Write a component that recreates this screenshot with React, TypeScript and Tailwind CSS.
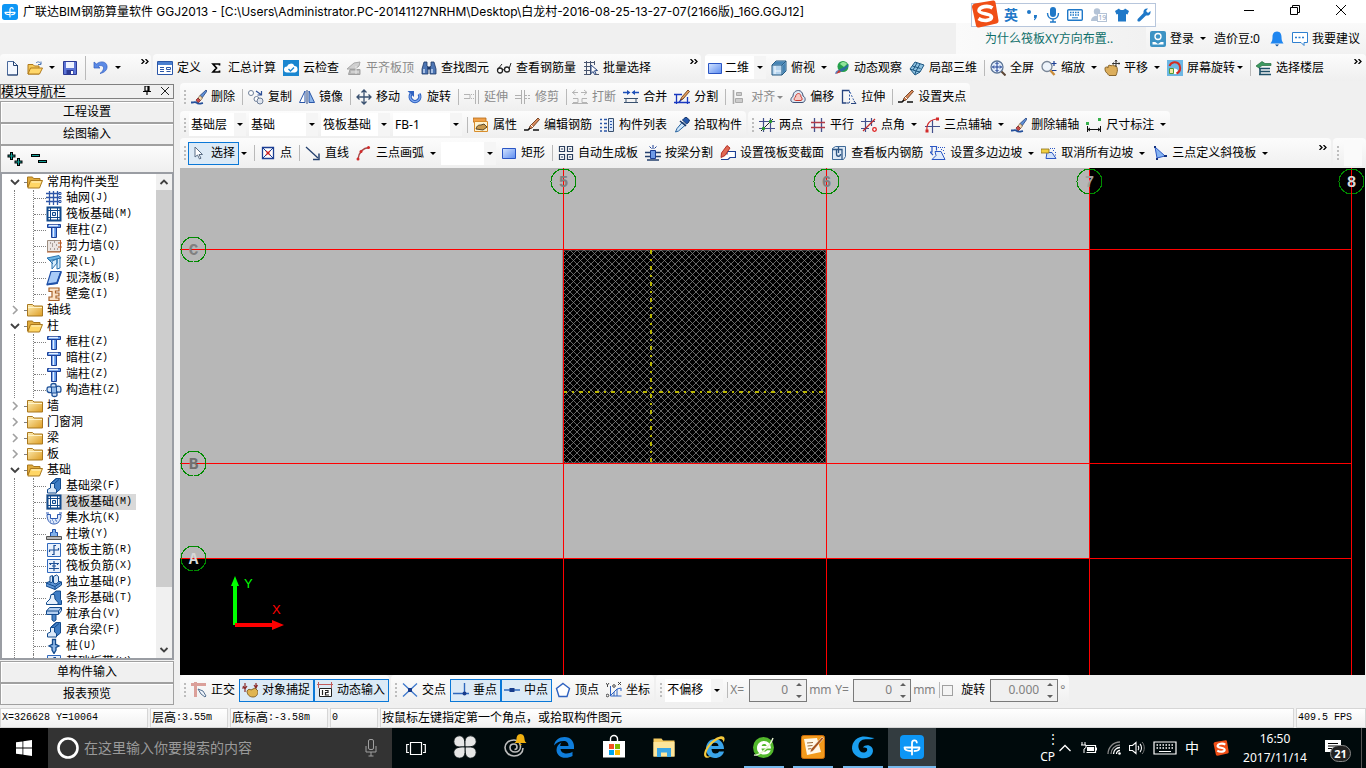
import type { ReactNode } from "react";

const CJK = "font-['Noto_Sans','Noto_Sans_CJK_SC',sans-serif]";

/* ---------- 16x16 icon drawings ---------- */

const column = (
  <>
    <path d="M1.5 2.5h13v3h-13z" fill="#5f97ea" stroke="#1c3f94" />
    <path d="M5.5 5.5h5v10h-5z" fill="#5f97ea" stroke="#1c3f94" />
    <path d="M7.5 6v9M3 3.5h9" stroke="#e4efff" strokeWidth="1.4" />
  </>
);
const raft = (
  <>
    <path d="M1.5 1.5h13v13h-13z" fill="#fff" stroke="#124a8c" strokeWidth="2" />
    <path d="M4.5 1v14M11.5 1v14M1 4.5h14M1 11.5h14" stroke="#124a8c" />
    <path d="M6.5 6.5h3v3h-3z" fill="#cfe2f7" stroke="#124a8c" />
  </>
);
const beam3d = (
  <>
    <path d="M5 5l5-4.500h4.500V11l-5 4z" fill="#3d7cc4" stroke="#124a8c" />
    <path d="M1.500 15v-3.500l3-1.500V5.500h4V10l2 1.500V15z" fill="#dbe9f9" stroke="#124a8c" />
    <path d="M5 5l5-4M8.500 5.500L13 1.500" stroke="#124a8c" />
  </>
);
const eraser = (
  <>
    <path d="M15 1L9 6.5l2 2.5L16 2z" fill="#5d8fd6" stroke="#27447f" strokeWidth=".8" />
    <path d="M9 6.5L7 9l2.5 2.5L11.5 9z" fill="#f0d9b4" stroke="#7b5a32" strokeWidth=".7" />
    <path d="M7 9l-2 2 2 3 2.5-2.5z" fill="#c94a4a" stroke="#6e2020" strokeWidth=".7" />
    <path d="M0 13.5c3 0 5-1 6 .5s4 .5 6 0" stroke="#24509c" fill="none" strokeWidth="1.8" />
  </>
);
const pencil = (
  <>
    <path d="M14 1l1.5 1.500L8 11l-3 1 1-3z" fill="#d98b5c" stroke="#6b3a1c" strokeWidth=".9" />
    <path d="M7 8l2 2" stroke="#fff" />
    <path d="M0 13h4l2-2M9 13h6" stroke="#111" strokeWidth="1.5" fill="none" />
  </>
);
const rectIcon = (
  <>
    <defs>
      <linearGradient id="rectFill" x1="0" y1="0" x2="1" y2="1">
        <stop offset="0" stopColor="#d5e5ff" />
        <stop offset="1" stopColor="#5c8cf0" />
      </linearGradient>
    </defs>
    <path d="M1.5 3.5h13v10h-13z" fill="url(#rectFill)" stroke="#2a55c4" />
  </>
);

const ICONS: Record<string, ReactNode> = {
  newFile: (
    <>
      <path d="M3.5 1.5h6l4 4v9.5h-10z" fill="#f4f8ff" stroke="#4a6a9c" />
      <path d="M9.5 1.5v4h4M13.5 5v10h-10" fill="none" stroke="#24406e" />
    </>
  ),
  open: (
    <>
      <path d="M1 4.5h5l1.5 1.5H12v8H1z" fill="#f4c95a" stroke="#b07a1c" />
      <path d="M3.5 8h12L12.5 14H1z" fill="#ffd76a" stroke="#b07a1c" />
      <path d="M9 3c2-2 4-1 5 1M14 1.5V4.5h-3" stroke="#4e79b8" fill="none" />
    </>
  ),
  save: (
    <>
      <path d="M1.5 1.5h13v13h-13z" fill="#5b74d6" stroke="#2c3a94" />
      <path d="M4 2h8v6H4z" fill="#eef2ff" />
      <path d="M4.5 10h7v4.5h-7z" fill="#2c3a94" />
      <path d="M9 11h2v3H9z" fill="#fff" />
    </>
  ),
  undo: <path d="M1 2v6h6L5 6.500c3-2 6-.5 5.500 2-.3 2-1.500 3.500-3.500 5 5-1 7.500-4 7-7.500C13.500 1.500 7.500.5 3.500 4z" fill="#5b8ae6" stroke="#2f5cc0" strokeWidth=".7" />,
  define: (
    <>
      <path d="M.5 1.5h15v13H.5z" fill="#fff" stroke="#2b57a8" />
      <path d="M1 2h14v3H1z" fill="#4a7fd0" />
      <path d="M3 7.5h4M3 9.5h4M3 11.5h4M9.5 7.5h4v2h-4zM9.5 11.5h4" stroke="#2b57a8" fill="none" />
    </>
  ),
  sigma: <path d="M11.500 5.500V4H5l3.500 4L5 12h6.500v-1.500" stroke="#000" strokeWidth="1.700" fill="none" />,
  cloudCheck: (
    <>
      <path d="M0 0h16v16H0z" fill="#1a86d0" />
      <path d="M4 12.5a3 3 0 010-6 4 4 0 017.5-.5 3.300 3.300 0 01.5 6.500z" fill="#fff" />
      <path d="M5.5 9l2 2L11 7.5" stroke="#1a86d0" strokeWidth="1.400" fill="none" />
    </>
  ),
  flush: (
    <>
      <path d="M1 9l7-6 6-1-1 4-4 3z" fill="#d0d0d0" stroke="#a8a8a8" />
      <path d="M4 9.5h10v5H2.5z" fill="#b8b8b8" stroke="#a0a0a0" />
      <path d="M5 12h8M10 6v8" stroke="#e8e8e8" />
    </>
  ),
  binoculars: (
    <>
      <path d="M3 2h3v4l1 1v7H1V9zM10 2h3l2 7v5H9V7l1-1z" fill="#4d75b3" stroke="#1d3766" strokeWidth=".8" />
      <path d="M6.5 6.5h3v3h-3z" fill="#1d3766" />
      <path d="M3 9v4M11 9v4" stroke="#cfe0fa" strokeWidth="1.400" />
    </>
  ),
  glasses: (
    <>
      <circle cx="4" cy="10.500" r="2.500" fill="#fff" stroke="#222" strokeWidth="1.300" />
      <circle cx="11" cy="9.500" r="2.500" fill="#fff" stroke="#222" strokeWidth="1.300" />
      <path d="M6.500 10l2-.5M2 9l4-5M13 9l2-6" stroke="#222" fill="none" />
    </>
  ),
  batch: (
    <>
      <path d="M1 2.5h11M1 6.5h8M1 10.5h6M1 14.5h6M3.5 1v14M7.5 1v14M11.5 1v4" stroke="#49556e" />
      <path d="M8 5l6.500 5.500-3 .3 1.500 3-1.500.7-1.300-3L8 13.500z" fill="#fff" stroke="#27447f" />
      <path d="M12 14.500h4" stroke="#49556e" />
    </>
  ),
  rect: rectIcon,
  cube: (
    <>
      <path d="M1 5l4-4h10v10l-4 4H1z" fill="#b5d4ee" stroke="#23577e" />
      <path d="M1 5h10v10M11 5l4-4" fill="none" stroke="#23577e" />
      <path d="M1.500 4.800L5 1.500h9L10.800 4.800zM11.500 5.500L14.500 2v9l-3 3z" fill="#4684b4" />
      <path d="M4 6v8M4 11h6" stroke="#f5faff" />
    </>
  ),
  orbit: (
    <>
      <circle cx="9" cy="6.500" r="5.500" fill="#25a04a" />
      <path d="M6 4c2-3 6-2 7 0l-3 3z" fill="#8fe39a" />
      <path d="M1 14C2 9 5 11 15 4c-1 6-8 8-14 10z" fill="#2d62b5" opacity=".8" />
      <path d="M2 14l3-4 2 2z" fill="#d23a2a" />
    </>
  ),
  local3d: (
    <>
      <path d="M1 9l5-7 9 3-4 7-5 3z" fill="#8ec1e0" stroke="#1d5680" />
      <path d="M1 9l6 2 4 1M7 11l4-7M6 14l1-3M3.500 6l8 2.500M4 10l4-7" stroke="#1d5680" fill="none" />
    </>
  ),
  fullscreen: (
    <>
      <circle cx="7" cy="7" r="6" fill="#e4eefb" stroke="#5c7597" strokeWidth="1.300" />
      <path d="M11.500 11.500l4 4" stroke="#5b4636" strokeWidth="2" />
      <path d="M7 2.500v9M2.500 7h9M5.500 4L7 2.500 8.500 4M5.500 10L7 11.500 8.500 10M4 5.500L2.500 7 4 8.500M10 5.500L11.500 7 10 8.500" stroke="#1c3f94" fill="none" />
    </>
  ),
  zoom: (
    <>
      <circle cx="6" cy="6.500" r="5" fill="#eef4fb" stroke="#7a8798" strokeWidth="1.300" />
      <path d="M9.500 10.500l4 4.500" stroke="#c98c3a" strokeWidth="2.400" />
      <path d="M13 1v5M10.500 3.500h5M11 10.500h4.500" stroke="#1c3f94" strokeWidth="1.200" />
    </>
  ),
  pan: (
    <>
      <path d="M1 9c0-3 2-2 3-1V6l2-1 1 1 1.500-1 1.500 1 1.500-.5 1.500 2c1 3 0 5-1 8H5c-1-2-4-3-4-6z" fill="#dcae5c" stroke="#7d5a20" strokeWidth=".9" />
      <path d="M12 0v7M8.500 3.500H16M11 1.500L12 0l1 1.500M9.500 2.500l-1 1 1 1M15 2.500l1 1-1 1" stroke="#333" fill="none" />
    </>
  ),
  rotateScreen: (
    <>
      <path d="M0 0h16v16H0z" fill="#6db7e4" />
      <path d="M5 9a4 3 0 016 2l-1 3H4z" fill="#fff" />
      <path d="M2.500 6a5.500 5.500 0 0110-1c1.500 4 0 7-3 8.500" stroke="#d42b20" strokeWidth="2" fill="none" />
      <path d="M2.500 8.500h4v5h-4z" fill="#f4e6a0" stroke="#4f9c3d" />
    </>
  ),
  floors: (
    <>
      <path d="M0 6l6-4.500 3 2H15v2H6L3 8z" fill="#3c9a60" stroke="#226b3d" strokeWidth=".7" />
      <path d="M3 8.500h11M4 11.500h10M3 14.500h12M4 8v7" stroke="#1f5068" strokeWidth="1.600" fill="none" />
    </>
  ),
  eraser,
  copy: (
    <>
      <circle cx="3" cy="4" r="2.500" fill="#fff" stroke="#6f7f98" />
      <circle cx="8.500" cy="10" r="2.500" fill="#fff" stroke="#6f7f98" />
      <circle cx="12" cy="12" r="3" fill="#dfe5ee" stroke="#6f7f98" />
      <path d="M8 2l5 3.500M13.500 2v4h-4" stroke="#2d4f96" strokeWidth="1.200" fill="none" />
    </>
  ),
  mirror: (
    <>
      <path d="M.5 13.500L6 2v11.500z" fill="#fff" stroke="#2b57a8" />
      <path d="M10 13.500V2l5.500 11.500z" fill="#8db6ea" stroke="#2b57a8" />
      <path d="M8 1v14" stroke="#27447f" />
    </>
  ),
  move: (
    <path d="M8 1v14M1 8h14M5.500 3.500L8 1l2.500 2.500M5.500 12.500L8 15l2.500-2.500M3.500 5.500L1 8l2.500 2.500M12.500 5.500L15 8l-2.500 2.500" stroke="#3a5170" strokeWidth="1.300" fill="none" />
  ),
  rotate: (
    <>
      <path d="M4 5a4.800 4.800 0 108 0" stroke="#2f62c0" strokeWidth="3.400" fill="none" />
      <path d="M4 5a4.800 4.800 0 108 0" stroke="#7fa8f0" strokeWidth="1.200" fill="none" />
      <path d="M.5 2h6.500v6z" fill="#2f62c0" />
    </>
  ),
  extend: (
    <>
      <path d="M0 5.500h6v4H0M7 5.500h1M9 5.500h1M7 9.500h1M9 9.500h1" stroke="#b4b4b4" fill="none" />
      <path d="M11.500 1v14M14.500 1v14" stroke="#b4b4b4" />
    </>
  ),
  trim: (
    <path d="M0 6.500h6M0 9.500h6M6.500 1v14M9.500 1v14M10 6.500h2M13 6.500h2M10 9.500h2M13 9.500h2" stroke="#b0b0b0" />
  ),
  breakIt: (
    <path d="M0 3.500h6M3.500 1l-3 2.500 3 2.500M9 3.500h6M12 1l3 2.500-3 2.500M1 9.500h5v4H1M15 9.500h-5v4h5M0 14.500h16" stroke="#b4b4b4" fill="none" />
  ),
  merge: (
    <>
      <path d="M0 3.500h5M10 3.500h6" stroke="#1e50b8" strokeWidth="1.400" />
      <path d="M4 1l3.500 2.500L4 6zM12 1L8.500 3.500 12 6z" fill="#1e50b8" />
      <path d="M1 9.500h14M1 13.500h14M3 9v5M13 9v5" stroke="#38506e" />
    </>
  ),
  split: (
    <>
      <path d="M0 5.500h8M0 13.500h16M2.500 5v10M13.500 8v7M5 13l5-5" stroke="#1838c0" strokeWidth="1.300" fill="none" />
      <path d="M14 1l1.500 1.500L9 10l-2.500 1L7.500 8.500z" fill="#e6a25c" stroke="#6b3a1c" strokeWidth=".9" />
    </>
  ),
  align: (
    <>
      <path d="M2.500 1v14" stroke="#aaa" strokeWidth="1.600" />
      <path d="M5.500 3.500h5v3h-5zM4.500 9.500h7v4h-7z" fill="#ccc" stroke="#aaa" />
    </>
  ),
  offset: (
    <>
      <path d="M4 13.500C-1 13.500 1 8 3 7.500 3 3 6 1.500 8.500 1.500S13 4 13 7c3 1 3 6.500-1 6.500z" fill="#e0e8f2" stroke="#3c4f74" />
      <path d="M5.500 11.500c-2 0-1.500-3 0-3.500 0-2 1.500-3.500 3-3.500s2.500 1.500 2.500 3.500c1.500.5 1.500 3.500 0 3.500z" fill="#f7c9c4" stroke="#cc3a30" />
    </>
  ),
  stretch: (
    <>
      <path d="M8.500 1.500h-7v12.500h4" stroke="#27447f" fill="none" strokeWidth="1.300" />
      <path d="M8.500 2v12M9 3l4.500 10" fill="none" stroke="#3d63a8" strokeDasharray="2 1.500" />
      <path d="M6 14h2M10 14.500h5M13 12l2 2.500" stroke="#27447f" fill="none" />
    </>
  ),
  pencil,
  property: (
    <>
      <path d="M0 1h13v4H0z" fill="#f0a048" stroke="#b56a18" strokeWidth=".8" />
      <path d="M1.500 4.500h13v10h-13z" fill="#fff3cf" stroke="#d88d2c" />
      <path d="M3 12c1-4 3-4 5-4l3-1 3 3-4 3z" fill="#c9994c" stroke="#4a3a1e" strokeWidth=".9" />
    </>
  ),
  list: (
    <>
      <path d="M1 2.500h2M5 2.500h3M1 6.500h2M5 6.500h3M1 10.500h2M5 10.500h3M1 14h2M5 14h3" stroke="#2b57a8" strokeWidth="1.300" />
      <path d="M9.500 1.500h5v13h-5z" fill="#d8e6fa" stroke="#38506e" />
      <path d="M11 4.500h2M11 7.500h2M11 10.500h2" stroke="#2b57a8" />
    </>
  ),
  picker: (
    <>
      <path d="M10 1.500L12 0l3.500 3-1 2.500-2 1.500-4-4z" fill="#2458ad" stroke="#143468" />
      <path d="M8.500 5l3 3-7 6L1.500 15 3 11.500z" fill="#cfe6fb" stroke="#27629e" />
      <path d="M6 4l6 5" stroke="#143468" strokeWidth="1.500" />
    </>
  ),
  axisTwo: (
    <>
      <path d="M0 4.500h16M0 11.500h16M4.500 1v14M11.500 1v14" stroke="#43508c" strokeWidth="1.200" />
      <path d="M2 14L14 2" stroke="#222" />
      <circle cx="11.500" cy="4.500" r="1.700" fill="#2a9a30" />
      <circle cx="4.500" cy="11.500" r="1.700" fill="#2a9a30" />
    </>
  ),
  axisParallel: (
    <>
      <path d="M4.500 1v14M11.500 1v14" stroke="#43508c" strokeWidth="1.300" />
      <path d="M1 5.500h14M1 10.500h14" stroke="#b23a48" strokeWidth="1.300" />
    </>
  ),
  axisAngle: (
    <>
      <path d="M0 4.500h14M0 11.500h8M4.500 1v14M10.500 1v8" stroke="#43508c" strokeWidth="1.200" />
      <path d="M2 14L14 2" stroke="#c22a2a" strokeWidth="1.200" />
      <circle cx="13.500" cy="12.500" r="1.800" fill="#fff" stroke="#d22" strokeWidth="1.300" />
    </>
  ),
  axisThree: (
    <>
      <path d="M1 9.500h15M8.500 3v13" stroke="#43508c" strokeWidth="1.200" />
      <path d="M3 14C2 7 6 2 14 2" stroke="#d22a2a" strokeWidth="1.200" fill="none" />
      <path d="M12 .5h3v3h-3zM1.500 12.500h3v3h-3z" fill="#d22a2a" />
    </>
  ),
  dimension: (
    <>
      <path d="M1.500 9v6M14.500 9v6M2 12.500h12M4 11l-2 1.500L4 14M12 11l2 1.500L12 14" stroke="#111" fill="none" />
      <path d="M0 5h3v3H0zM12 1h3v3h-3z" fill="#36b04a" />
    </>
  ),
  cursor: <path d="M4 2v10l2.500-2 2 4 1.500-.8-2-3.700h3.500z" fill="#fff" stroke="#5b6f86" />,
  point: (
    <>
      <path d="M2.500 2.500h11v11h-11z" fill="#fff" stroke="#1c3f94" strokeWidth="1.300" />
      <path d="M3 3l10 10M13 3L3 13" stroke="#1c3f94" />
      <path d="M6 6l4 4M10 6l-4 4" stroke="#c22" strokeWidth="1.400" />
    </>
  ),
  line: (
    <>
      <path d="M1 2l12 11" stroke="#24406e" strokeWidth="1.300" />
      <path d="M14 8.500v6H8" stroke="#24406e" strokeWidth="1.500" fill="none" />
    </>
  ),
  arc: (
    <>
      <path d="M2 14C3 8 6 3 13 2.500" stroke="#a84848" strokeWidth="1.500" fill="none" />
      <circle cx="12.500" cy="2.500" r="1.500" fill="#d22a2a" />
      <circle cx="5" cy="6.500" r="1.500" fill="#d22a2a" />
      <circle cx="2" cy="14" r="1.500" fill="#d22a2a" />
    </>
  ),
  autoSlab: (
    <path d="M1.500 1.500h5v5h-5zM9.500 1.500h5v5h-5zM1.500 9.500h5v5h-5zM9.500 9.500h5v5h-5zM3 4h2M11 4h2M3 12h2M11 12h2" fill="#fff" stroke="#2b3f5e" strokeWidth="1.200" />
  ),
  beamSplit: (
    <>
      <path d="M0 7.500h16M0 11.500h16M2 15h12" stroke="#24406e" strokeWidth="1.300" />
      <path d="M5.500 5.500h5v8h-5z" fill="#6f9be6" stroke="#1c3f94" />
      <path d="M8 0v4M4.500 1.500l2 2M11.500 1.500l-2 2" stroke="#1c3f94" />
    </>
  ),
  raftSection: (
    <>
      <path d="M7 9.500V6.500h8.500v6H10l-2 2H1" stroke="#1c3f94" strokeWidth="1.200" fill="#fff" />
      <path d="M7 .5l3 2.500L5 10.500l-4 2 .5-4.500z" fill="#e06a54" stroke="#b02418" strokeWidth=".9" />
    </>
  ),
  rebarView: (
    <>
      <path d="M1.500 3.500l3-2h10v10l-2 3h-11z" fill="#dfeaf6" stroke="#3f6a98" />
      <path d="M1 4.500h10v10M5.500 4v5c0 3 4 3 4 0M7.500 2v6" fill="none" stroke="#2d5684" strokeWidth="1.300" />
    </>
  ),
  slope: (
    <>
      <path d="M5 6.500h6l4 8H2l4-4z" fill="#e2ecfb" stroke="#2b57c4" />
      <path d="M0 1.500h6M6.500 1v4.500M2 2v5H0l3 3" stroke="#2b57c4" strokeWidth="1.200" fill="none" />
      <path d="M8 2.500h1M10 2.500h1M12 2.500h1M14 2.500h1M13 5.500h1M11 4.500h1M14 8.500h1" stroke="#2b57c4" />
    </>
  ),
  slopeCancel: (
    <>
      <path d="M6 7.500h5l4 6H5z" fill="#cfe0fb" stroke="#2b57c4" />
      <path d="M0 4h8v4H0z" fill="#f2d040" stroke="#8c701c" strokeWidth=".8" />
      <path d="M9 3.500h1M11 3.500h1M13 3.500h1M12 5.500h1M14 7.500h1M14 10h1" stroke="#2b57c4" />
    </>
  ),
  raftSlope: (
    <>
      <path d="M3 2l10 9-8 2z" fill="#86b4f2" stroke="#2b57c4" />
      <path d="M2 1h2v2H2zM12 10h3v2h-3zM4 13h2v2H4z" fill="#12307c" />
    </>
  ),
  ortho: (
    <>
      <path d="M0 2.500h15M4.500 0v15" stroke="#dba09a" strokeWidth="3" />
      <path d="M7 7l5 2 3 5-1 1-4-3z" fill="#eef3fa" stroke="#56708f" />
    </>
  ),
  snap: (
    <>
      <path d="M3 1v9M1 4l2 3 2-3M14 1v5M12 3l2 3 1.500-3M0 6h3" stroke="#8a2a2a" strokeWidth="1.200" fill="none" />
      <path d="M5 9c1-2 3-2 4-1l4-2 3 3c0 4-2 6-5 6-4 0-6-3-6-6z" fill="#e0b450" stroke="#7d5a20" strokeWidth=".9" />
    </>
  ),
  dynInput: (
    <>
      <path d="M0 2.500h16M1.500 0v6M14.500 0v6" stroke="#c25b5b" />
      <path d="M2.500 6.500h12v8h-12z" fill="#fff" stroke="#222" />
      <path d="M5.500 8v5M8 8.500h3v2H8.500V13H12" stroke="#222" strokeWidth="1.200" fill="none" />
    </>
  ),
  cross: (
    <>
      <path d="M1 1.500l14 13M15 1.500l-14 13" stroke="#3d78cc" strokeWidth="1.300" />
      <path d="M6 6h4v4H6z" fill="#173c8c" />
    </>
  ),
  perp: (
    <>
      <path d="M0 11.500h16M11.500 1v12" stroke="#2f68bd" strokeWidth="1.400" />
      <circle cx="11.500" cy="11.500" r="2" fill="#173c8c" />
    </>
  ),
  mid: (
    <>
      <path d="M0 8h16" stroke="#2f68bd" strokeWidth="1.300" />
      <path d="M5.500 6h5v4h-5z" fill="#173c8c" />
    </>
  ),
  pentagon: <path d="M8 1.500l6.500 5-2.500 8H4l-2.500-8z" fill="#fff" stroke="#2f62c0" strokeWidth="1.400" />,
  coord: (
    <>
      <path d="M4.500 4v10h11M5 13l6-6v7M8 10v4M11 7l4-1v3" stroke="#2f62c0" fill="none" />
      <path d="M0 1l1.500 2L3 1M1.500 3v2M12 0l3 3M15 0l-3 3" stroke="#333" fill="none" strokeWidth=".9" />
      <circle cx="1.500" cy="13.500" r="1.300" fill="none" stroke="#333" strokeWidth=".9" />
      <circle cx="8" cy="4" r="1.300" fill="none" stroke="#333" strokeWidth=".9" />
    </>
  ),
  folder: (
    <>
      <defs>
        <linearGradient id="folderFill" x1="0" y1="0" x2="1" y2="1">
          <stop offset="0" stopColor="#fff0b8" />
          <stop offset="1" stopColor="#dd9c22" />
        </linearGradient>
      </defs>
      <path d="M.5 2.500h5l1.500 1.500h8.500v10H.5z" fill="url(#folderFill)" stroke="#a9781f" />
      <path d="M1 5.500h14" stroke="#fff3c8" />
    </>
  ),
  folderOpen: (
    <>
      <path d="M.5 3h5l1 1.500h6.500V7H4L.5 13z" fill="#e0ab3c" stroke="#a9781f" />
      <path d="M3.500 6.500h12L12.500 14H.8z" fill="#ffd666" stroke="#a9781f" />
      <path d="M4.500 8h9.500" stroke="#fff3c8" />
    </>
  ),
  grid: (
    <>
      <path d="M3.500 1v14M7.500 1v14M11.500 1v14M0 3.500h13M0 7.500h13M0 11.500h13" stroke="#2f57a8" strokeWidth="1.300" />
      <path d="M13 2.500h2v2h-2zM13 6.500h2v2h-2zM13 10.500h2v2h-2z" fill="#fff" stroke="#2f57a8" />
    </>
  ),
  raft,
  column,
  wall: (
    <>
      <path d="M1.500 2.500h13v11h-13z" fill="#ece6e2" stroke="#9c8d80" />
      <path d="M4 5h1M8 4h1M6 8h1M10 7h1M4 11h1M8 11h1M11 11h1M6 6h1" stroke="#6b5a50" />
      <path d="M1 14h13M14.500 2v12M12 5h4M12 9h4" stroke="#b85a24" fill="none" />
    </>
  ),
  beam: (
    <>
      <path d="M1 4l12-2.500L15 4 4 6.500z" fill="#6fb6e6" stroke="#2b74b0" />
      <path d="M6 7l5-2v4L6 15zM11 5l3-1v10l-3 1z" fill="#d9eefb" stroke="#2b74b0" />
      <path d="M2 5l5 5" stroke="#2b74b0" />
    </>
  ),
  slab: (
    <>
      <path d="M5 1.500h10L11 13.500l-10 1z" fill="#a9cbf7" stroke="#1f50a8" strokeWidth="1.200" />
      <path d="M1 14.500L11 13l4-11" fill="none" stroke="#1f50a8" strokeWidth="1.800" />
    </>
  ),
  niche: <path d="M3 2h10v3H9.500v2H13v3h-3v2h3v2.500H3V11h3V5.500H3z" fill="#fbe3c8" stroke="#a8622a" strokeWidth="1.200" />,
  structCol: (
    <>
      <path d="M5 3c0-2 5-2 5 0v1.500c4-1 5 0 5 3s-1 3-4 2.500V13c0 2-5 2-5 0v-2.500c-4 .5-5-.5-5-3s1-3 4-2.500z" fill="#d4e5f8" stroke="#1c4f96" strokeWidth="1.300" />
      <path d="M5.500 5h5v6h-5z" fill="#8fb8e8" stroke="#1c4f96" />
    </>
  ),
  beam3d,
  pit: (
    <>
      <path d="M1 4.500h3.500v4h7v-4H15C15 11 12 14 8 14S1 11 1 4.500z" fill="#dbe8fb" stroke="#2b57b0" />
      <path d="M4 11h1M7 12h1M10 11h1M6 10h1M9 10h1M0 3h3M13 3h3" stroke="#2b57b0" />
    </>
  ),
  pier: (
    <>
      <path d="M6.500 3.500h3v3h2v4h-7v-4h2z" fill="#7fb0ea" stroke="#1f50a8" />
      <path d="M.5 10.500h15v3H.5z" fill="#b8b8b8" stroke="#555" />
    </>
  ),
  mainBar: (
    <>
      <path d="M1.500 1.500h13v13h-13z" fill="#eaf2fd" stroke="#2f68bd" />
      <path d="M8 3v10M3 8h10M8 3.500h2M6 12.500h2M3.500 8v2M12.500 6v2" stroke="#1c4f96" strokeWidth="1.200" />
    </>
  ),
  negBar: (
    <>
      <path d="M1.500 1.500h13v13h-13z" fill="#eaf2fd" stroke="#2f68bd" />
      <path d="M8 3v10M3 5.500h10M3 10.500h10M4.500 5v2M11.500 5v2M6 8h4" stroke="#1c4f96" strokeWidth="1.200" />
    </>
  ),
  isoFoot: (
    <>
      <path d="M0 9l7-3 8.500 2v3l-6.500 4.500L0 12z" fill="#5f96d6" stroke="#124a8c" />
      <path d="M0 9l9 3.500L15.500 8M9 12.500v3" fill="none" stroke="#124a8c" />
      <path d="M4 2.500l2.500-1V8L4 9zM7.500 2.500l3-1.500 2 1.500V8l-2.500 2-2.500-1z" fill="#d6e6f8" stroke="#124a8c" />
    </>
  ),
  strip: (
    <>
      <path d="M6 4.500L10 1h4.500v8.500l1 1v4H9z" fill="#3d7cc4" stroke="#124a8c" />
      <path d="M.5 14.500v-2L4 9l1-4.500h3.500L9 9l3 3.500v2z" fill="#e6f0fb" stroke="#124a8c" />
    </>
  ),
  pileCap: (
    <>
      <path d="M.5 5l3-3.500h12v3l-3 4H.5z" fill="#b4cff0" stroke="#124a8c" />
      <path d="M.5 5h12l3-3.500M12.500 5v3" fill="none" stroke="#124a8c" />
      <path d="M6 8.500h4V14l-2 1.500L6 14z" fill="#4f88c9" stroke="#124a8c" />
    </>
  ),
  pile: <path d="M6.500 1.500h3v5H10l3 1.500-3 1.500V12l-2 3.500L6 12V9.500L3 8l3-1.500h.5z" fill="#8fb8e8" stroke="#124a8c" strokeWidth="1.300" />,
};

function Icon({ name }: { name: string }) {
  return (
    <svg viewBox="0 0 16 16" className="size-4 shrink-0" aria-hidden="true">
      {ICONS[name]}
    </svg>
  );
}

/* ---------- toolbar parts ---------- */

function Arrow({ dim, tight }: { dim?: boolean; tight?: boolean }) {
  return (
    <span className={"flex shrink-0 justify-end " + (tight ? "w-2" : "w-3")}>
      <svg viewBox="0 0 6 3" className={"h-[3px] w-1.5 " + (dim ? "text-[#8a8a8a]" : "text-black")}>
        <path d="M0 0h6L3 3z" fill="currentColor" />
      </svg>
    </span>
  );
}

type ToolProps = { icon: string; label?: string; dim?: boolean; menu?: boolean; tight?: boolean };

function Tool({ icon, label, dim, menu, tight }: ToolProps) {
  return (
    <button type="button" aria-label={label ?? icon} className={"flex shrink-0 items-center " + (dim ? "text-[#8a8a8a]" : "text-black")}>
      <Icon name={icon} />
      {label && <span className="ml-1">{label}</span>}
      {(menu || tight) && <Arrow dim={dim} tight={tight} />}
    </button>
  );
}

function Pressed({ icon, label }: { icon: string; label: string }) {
  return (
    <button type="button" className="flex h-[23px] shrink-0 items-center gap-1 border border-[#0a78d7] bg-[#dceaf6] pr-[3px] pl-0.5">
      <Icon name={icon} />
      <span>{label}</span>
    </button>
  );
}

const Sep = () => <span className="-mr-0.5 h-4 w-px shrink-0 bg-[#b9b9b9]" />;
const Grip = () => (
  <span className="-mr-0.5 flex shrink-0 flex-col gap-0.5">
    <i className="size-0.5 bg-[#bdbdbd]" />
    <i className="size-0.5 bg-[#bdbdbd]" />
    <i className="size-0.5 bg-[#bdbdbd]" />
    <i className="size-0.5 bg-[#bdbdbd]" />
  </span>
);

function More() {
  return (
    <button type="button" aria-label="更多" className="mb-3 shrink-0">
      <svg viewBox="0 0 8 5" className="h-[5px] w-2">
        <path d="M.5 0L3 2.500.5 5M4.500 0L7 2.500 4.500 5" fill="none" stroke="#000" strokeWidth="1.300" />
      </svg>
    </button>
  );
}

function Combo({ label, value, width }: { label: string; value: string; width: string }) {
  return (
    <span className={"flex h-[23px] shrink-0 items-center bg-white " + width}>
      <select aria-label={label} className="h-full min-w-0 flex-1 appearance-none bg-white pl-0.5 outline-none">
        <option>{value}</option>
      </select>
      <span className="flex h-full w-3 items-center justify-center bg-[#f5f5f5]">
        <svg viewBox="0 0 6 3" className="h-[3px] w-1.5">
          <path d="M0 0h6L3 3z" />
        </svg>
      </span>
    </span>
  );
}

function Bar({ children, className = "" }: { children: ReactNode; className?: string }) {
  return (
    <div className={"flex min-w-0 items-center gap-[7px] overflow-hidden rounded-sm bg-linear-to-b from-[#fcfcfc] to-[#efefef] " + className}>
      {children}
    </div>
  );
}

/* ---------- header ---------- */

function GLogo({ className }: { className: string }) {
  return (
    <svg viewBox="0 0 24 24" className={className} aria-hidden="true">
      <rect width="24" height="24" rx="4" fill="#0d96f5" />
      <path d="M12 19.500V8c0-3.500 4.500-3.500 4.800-.5M4.500 12.500H19.500M4.500 12.500c0 2.500 2.500 3.500 7 3.500M19.500 12.500c0 2.500-2 3.500-5 3.500" stroke="#fff" strokeWidth="1.800" fill="none" strokeLinecap="round" />
    </svg>
  );
}

function TitleBar() {
  return (
    <header className="flex h-[23px] shrink-0 items-center bg-white pl-0.5">
      <GLogo className="size-4 shrink-0" />
      <h1 className="ml-[5px] min-w-0 flex-1 truncate font-['Inter','Noto_Sans_CJK_SC',sans-serif] text-[12px] font-normal">
        广联达BIM钢筋算量软件 GGJ2013 - [C:\Users\Administrator.PC-20141127NRHM\Desktop\白龙村-2016-08-25-13-27-07(2166版)_16G.GGJ12]
      </h1>
      <div className="flex shrink-0 items-center gap-9 pr-5 pb-1">
        <button type="button" aria-label="最小化">
          <svg viewBox="0 0 10 10" className="size-2.5"><path d="M0 5.500h10" stroke="#000" /></svg>
        </button>
        <button type="button" aria-label="还原">
          <svg viewBox="0 0 10 10" className="size-2.5"><path d="M.5 2.500h7v7h-7zM2.500 2.500v-2h7v7h-2" fill="none" stroke="#000" /></svg>
        </button>
        <button type="button" aria-label="关闭">
          <svg viewBox="0 0 10 10" className="size-2.5"><path d="M0 0l10 10M10 0L0 10" stroke="#000" /></svg>
        </button>
      </div>
    </header>
  );
}

function SogouS({ className }: { className: string }) {
  return (
    <svg viewBox="0 0 28 28" className={className} aria-hidden="true">
      <path d="M4 3.500L22 .5c1.500 0 2 .5 2.500 2l3 18c0 2-.5 2.500-2 3L8 27.500c-2 0-2.500-.5-3-2L1 7c0-2 1-3 3-3.500z" fill="#f04e16" />
      <path d="M21.500 8C17 5 8.500 6.500 8 10.500c-.3 4 12.500 2.500 12.500 6.500 0 4-8.500 4.500-13 1.500" stroke="#fff" strokeWidth="3.600" fill="none" />
    </svg>
  );
}

function ImeBar() {
  return (
    <div className="absolute top-0 right-[210px] flex h-[27px] w-[185px] items-end">
      <div className="flex h-6 w-full items-center justify-between border border-[#b7c6dc] bg-white pr-1 pl-8 text-[#1f78c8]">
        <span className="text-[14px] font-bold">英</span>
        <svg viewBox="0 0 12 12" className="size-3 shrink-0"><circle cx="3" cy="3" r="2" fill="currentColor" /><path d="M8 6h3c0 3-1 4-3 5.500V10c1-.5 1-1 0-1z" fill="currentColor" /></svg>
        <svg viewBox="0 0 14 16" className="h-4 w-3.5 shrink-0"><rect x="4" y="0" width="6" height="10" rx="3" fill="currentColor" /><path d="M1.500 6c0 8 11 8 11 0M7 12v3M4 15h6" stroke="currentColor" strokeWidth="1.400" fill="none" /></svg>
        <svg viewBox="0 0 16 12" className="h-3 w-4 shrink-0"><rect x=".7" y=".7" width="14.600" height="10.600" rx="1" fill="none" stroke="currentColor" strokeWidth="1.400" /><path d="M3 3.500h10M3 6h10" stroke="currentColor" strokeDasharray="1.500 1" strokeWidth="1.300" /><path d="M5 8.800h6" stroke="currentColor" /></svg>
        <span className="flex shrink-0 items-end">
          <svg viewBox="0 0 12 14" className="h-3.5 w-3"><circle cx="6" cy="3.500" r="3.200" fill="#b4c3d6" /><path d="M0 13c0-7 12-7 12 0z" fill="#b4c3d6" /></svg>
          <span className="-ml-1.5 border border-[#b4c3d6] bg-white text-[7px] leading-[7px] text-[#8fa3bc]">19</span>
        </span>
        <svg viewBox="0 0 14 13" className="h-3.5 w-3.5 shrink-0"><path d="M4 0c1 2 5 2 6 0l4 2.500L12.500 6 11 5.500V13H3V5.500L1.500 6 0 2.500z" fill="currentColor" /></svg>
        <svg viewBox="0 0 14 14" className="size-3.5 shrink-0"><path d="M13.500 3l-2.500 2-2-2L11 .5C8 0 6 2 6.500 5L.7 11c-1 2 .5 3 2.300 2.200L9 7.500c3 .5 5-1.500 4.500-4.500z" fill="currentColor" /></svg>
      </div>
      <SogouS className="absolute top-0 left-0 size-7" />
    </div>
  );
}

function MenuRow() {
  return (
    <div className="flex h-[31px] shrink-0 justify-end">
      <a href="#help" className="flex w-[190px] items-center bg-linear-to-r from-[#fafafa] to-[#f1f1f1] pl-[29px] text-[#0e6f6a]">
        为什么筏板XY方向布置..
      </a>
      <div className="flex items-center bg-linear-to-b from-[#fafafa] to-[#f1f1f1] pr-1.5 pl-1">
        <button type="button" className="flex items-center">
          <svg viewBox="0 0 16 16" className="size-4"><rect width="16" height="16" rx="2" fill="#3d93c4" /><circle cx="8" cy="5.500" r="3" fill="none" stroke="#fff" strokeWidth="1.400" /><path d="M2.500 13.500V11h2.700L8 13l2.800-2h2.700v2.500z" fill="#fff" /></svg>
          <span className="ml-1">登录</span>
          <Arrow />
        </button>
        <span className="ml-2">造价豆:0</span>
        <button type="button" aria-label="通知" className="ml-2.5">
          <svg viewBox="0 0 14 16" className="h-4 w-3.5"><path d="M7 .5c3.500 0 4.500 3 4.500 5.500 0 3 .5 4.500 2 6.500H.5c1.500-2 2-3.500 2-6.500C2.500 3.500 3.500.5 7 .5z" fill="#1f86f0" /><path d="M5 13.500h4L7 15.500z" fill="#0b4f9c" /></svg>
        </button>
        <button type="button" className="ml-2 flex items-center">
          <svg viewBox="0 0 16 16" className="size-4"><path d="M.5 1.500h15v10H12v3l-3-3H.5z" fill="#fff" stroke="#2f80d0" /><path d="M3 6.500h10" stroke="#2f80d0" strokeDasharray="2 1.500" strokeWidth="1.300" /></svg>
          <span className="ml-1">我要建议</span>
        </button>
      </div>
    </div>
  );
}

function TopToolbars() {
  return (
    <div className="mb-0.5 flex h-[27px] shrink-0 gap-0.5">
      <Bar className="w-[151px] shrink-0 pr-0.5 pl-1">
        <Tool icon="newFile" />
        <Tool icon="open" menu />
        <Tool icon="save" />
        <span className="h-6 w-px shrink-0 bg-[#b9b9b9]" />
        <Tool icon="undo" menu />
        <span className="flex-1" />
        <More />
      </Bar>
      <Bar className="w-[548px] shrink-0 pr-[3px] pl-1">
        <Tool icon="define" label="定义" />
        <Tool icon="sigma" label="汇总计算" />
        <Tool icon="cloudCheck" label="云检查" />
        <Tool icon="flush" label="平齐板顶" dim />
        <Tool icon="binoculars" label="查找图元" />
        <Tool icon="glasses" label="查看钢筋量" />
        <Tool icon="batch" label="批量选择" />
        <span className="flex-1" />
        <More />
      </Bar>
      <Bar className="ml-0.5 flex-1 pr-1">
        <span className="-mr-0.5 flex shrink-0 items-center bg-white pl-0.5">
          <Icon name="rect" />
          <Combo label="视图" value="二维" width="w-[43px]" />
        </span>
        <Tool icon="cube" label="俯视" menu />
        <Tool icon="orbit" label="动态观察" />
        <Tool icon="local3d" label="局部三维" />
        <Sep />
        <Tool icon="fullscreen" label="全屏" />
        <Tool icon="zoom" label="缩放" menu />
        <Tool icon="pan" label="平移" menu />
        <Tool icon="rotateScreen" label="屏幕旋转" tight />
        <Sep />
        <Tool icon="floors" label="选择楼层" />
        <span className="flex-1" />
        <More />
      </Bar>
    </div>
  );
}

/* ---------- left navigation ---------- */

type Leaf = [icon: string, name: string, key: string];
type Group = { name: string; open?: boolean; items?: Leaf[] };

const TREE: Group[] = [
  {
    name: "常用构件类型",
    open: true,
    items: [
      ["grid", "轴网", "J"],
      ["raft", "筏板基础", "M"],
      ["column", "框柱", "Z"],
      ["wall", "剪力墙", "Q"],
      ["beam", "梁", "L"],
      ["slab", "现浇板", "B"],
      ["niche", "壁龛", "I"],
    ],
  },
  { name: "轴线" },
  {
    name: "柱",
    open: true,
    items: [
      ["column", "框柱", "Z"],
      ["column", "暗柱", "Z"],
      ["column", "端柱", "Z"],
      ["structCol", "构造柱", "Z"],
    ],
  },
  { name: "墙" },
  { name: "门窗洞" },
  { name: "梁" },
  { name: "板" },
  {
    name: "基础",
    open: true,
    items: [
      ["beam3d", "基础梁", "F"],
      ["raft", "筏板基础", "M"],
      ["pit", "集水坑", "K"],
      ["pier", "柱墩", "Y"],
      ["mainBar", "筏板主筋", "R"],
      ["negBar", "筏板负筋", "X"],
      ["isoFoot", "独立基础", "P"],
      ["strip", "条形基础", "T"],
      ["pileCap", "桩承台", "V"],
      ["beam3d", "承台梁", "F"],
      ["pile", "桩", "U"],
      ["mainBar", "基础板带", "W"],
    ],
  },
];

function TreeGroup({ group, current }: { group: Group; current: boolean }) {
  return (
    <li>
      <button type="button" className="flex h-4 items-center pl-2">
        <svg viewBox="0 0 10 10" className="size-2.5">
          {group.open ? (
            <path d="M1 3l4 4 4-4" fill="none" stroke="#404040" strokeWidth="1.800" />
          ) : (
            <path d="M3 1l4 4-4 4" fill="none" stroke="#a0a0a0" strokeWidth="1.600" />
          )}
        </svg>
        <span className="mr-px ml-1 w-0.5 border-t border-dotted border-[#808080]" />
        <Icon name={group.open ? "folderOpen" : "folder"} />
        <span className="ml-1">{group.name}</span>
      </button>
      {group.items && (
        <ul className="ml-3 border-l border-dotted border-[#808080] pl-[18px]">
          {group.items.map(([icon, name, key], i) => (
            <li key={name} className="border-l border-dotted border-[#808080]">
              <button type="button" className="flex h-4 items-center">
                <span className="w-3 border-t border-dotted border-[#808080]" />
                <span className={"flex h-4 items-center pr-1 " + (current && i === 1 ? "bg-[#d9d9d9]" : "")}>
                  <Icon name={icon} />
                  <span className="ml-1">{name}</span>
                  <span className="font-['Liberation_Mono',monospace] text-[10px]">({key})</span>
                </span>
              </button>
            </li>
          ))}
        </ul>
      )}
    </li>
  );
}

function NavButton({ children }: { children: string }) {
  return (
    <button type="button" className="flex h-[22px] w-full shrink-0 items-center justify-center border border-[#a0a0a0] bg-[#f0f0f0] shadow-[inset_1px_1px_0_#fff]">
      {children}
    </button>
  );
}

function Sidebar() {
  return (
    <aside className="flex w-44 shrink-0 flex-col pt-px pr-0.5">
      <div className="flex h-[15px] shrink-0 items-center border border-[#808080] pb-0.5">
        <h2 className="flex-1 text-[13px] leading-3">模块导航栏</h2>
        <button type="button" aria-label="固定">
          <svg viewBox="0 0 8 9" className="h-[9px] w-2"><path d="M2 0h4v5H2zM5 0v5M0 5.500h8M4 6v3" fill="none" stroke="#000" strokeWidth="1.200" /></svg>
        </button>
        <button type="button" aria-label="关闭面板" className="mr-1 ml-2.5">
          <svg viewBox="0 0 8 8" className="size-2"><path d="M0 0l8 8M8 0L0 8" stroke="#222" /></svg>
        </button>
      </div>
      <div className="mt-0.5 flex min-h-0 flex-1 flex-col">
        <NavButton>工程设置</NavButton>
        <NavButton>绘图输入</NavButton>
        <div className="flex h-[27px] shrink-0 items-center gap-2 border-x border-t border-[#a0a0a0] bg-linear-to-b from-[#fcfcfc] to-[#efefef] pl-1.5">
          <button type="button" aria-label="展开">
            <svg viewBox="0 0 16 16" className="size-4"><path d="M4.500 1v8M.5 5h8M11.500 7v8M7.500 11h8" stroke="#000" strokeWidth="3" /><path d="M4.500 2v6M1.500 5h6M11.500 8v6M8.500 11h6" stroke="#12a098" /></svg>
          </button>
          <button type="button" aria-label="折叠">
            <svg viewBox="0 0 16 16" className="size-4"><path d="M0 4.500h9M7 10.500h9" stroke="#000" strokeWidth="3" /><path d="M1 4.500h7M8 10.500h7" stroke="#12a098" /></svg>
          </button>
        </div>
        <div className="flex min-h-0 flex-1 border-2 border-[#9a9da3] bg-white">
          <ul className="min-w-0 flex-1 overflow-hidden whitespace-nowrap">
            {TREE.map((group) => (
              <TreeGroup key={group.name} group={group} current={group.name === "基础"} />
            ))}
          </ul>
          <div className="flex w-4 shrink-0 flex-col bg-[#f0f0f0]">
            <svg viewBox="0 0 16 16" className="size-4 shrink-0"><path d="M4.500 10L8 6.500l3.500 3.500" fill="none" stroke="#404040" strokeWidth="1.800" /></svg>
            <div className="h-[82%] bg-[#cdcdcd]" />
            <span className="flex-1" />
            <svg viewBox="0 0 16 16" className="size-4 shrink-0"><path d="M4.500 6L8 9.500 11.500 6" fill="none" stroke="#404040" strokeWidth="1.800" /></svg>
          </div>
        </div>
        <div className="mt-px shrink-0">
          <NavButton>单构件输入</NavButton>
          <NavButton>报表预览</NavButton>
        </div>
      </div>
    </aside>
  );
}

/* ---------- drawing toolbars ---------- */

function EditToolbars() {
  return (
    <>
      <div className="flex h-7 shrink-0">
        <Bar className="pr-1 pl-1">
          <Grip />
          <Tool icon="eraser" label="删除" />
          <Sep />
          <Tool icon="copy" label="复制" />
          <Tool icon="mirror" label="镜像" />
          <Sep />
          <Tool icon="move" label="移动" />
          <Tool icon="rotate" label="旋转" />
          <Sep />
          <Tool icon="extend" label="延伸" dim />
          <Tool icon="trim" label="修剪" dim />
          <Sep />
          <Tool icon="breakIt" label="打断" dim />
          <Tool icon="merge" label="合并" />
          <Tool icon="split" label="分割" />
          <Sep />
          <Tool icon="align" label="对齐" dim tight />
          <Tool icon="offset" label="偏移" />
          <Tool icon="stretch" label="拉伸" />
          <Sep />
          <Tool icon="pencil" label="设置夹点" />
        </Bar>
      </div>
      <div className="flex h-[27px] shrink-0 gap-0.5">
        <Bar className="pr-1 pl-1">
          <Grip />
          <div className="-mr-0.5 -ml-0.5 flex gap-[3px]">
            <Combo label="楼层" value="基础层" width="w-[57px]" />
            <Combo label="类型" value="基础" width="w-[69px]" />
            <Combo label="构件类型" value="筏板基础" width="w-[69px]" />
            <Combo label="构件" value="FB-1" width="w-[69px]" />
          </div>
          <Sep />
          <Tool icon="property" label="属性" />
          <Tool icon="pencil" label="编辑钢筋" />
          <Tool icon="list" label="构件列表" />
          <Tool icon="picker" label="拾取构件" />
        </Bar>
        <Bar className="pr-1 pl-1">
          <Grip />
          <Tool icon="axisTwo" label="两点" />
          <Tool icon="axisParallel" label="平行" />
          <Tool icon="axisAngle" label="点角" menu />
          <Tool icon="axisThree" label="三点辅轴" menu />
          <Tool icon="eraser" label="删除辅轴" />
          <Tool icon="dimension" label="尺寸标注" menu />
        </Bar>
      </div>
      <div className="flex h-[30px] shrink-0 gap-0.5">
        <Bar className="flex-1 pr-1 pl-1">
          <Grip />
          <span className="-ml-[3px] flex shrink-0 items-center">
            <Pressed icon="cursor" label="选择" />
            <Arrow tight />
          </span>
          <Sep />
          <Tool icon="point" label="点" />
          <Sep />
          <Tool icon="line" label="直线" />
          <Tool icon="arc" label="三点画弧" menu />
          <span className="-mx-0.5">
            <Combo label="画弧方式" value="" width="w-[55px]" />
          </span>
          <Tool icon="rect" label="矩形" />
          <Sep />
          <Tool icon="autoSlab" label="自动生成板" />
          <Tool icon="beamSplit" label="按梁分割" />
          <Tool icon="raftSection" label="设置筏板变截面" />
          <Tool icon="rebarView" label="查看板内钢筋" />
          <Tool icon="slope" label="设置多边边坡" menu />
          <Tool icon="slopeCancel" label="取消所有边坡" menu />
          <Tool icon="raftSlope" label="三点定义斜筏板" menu />
          <span className="flex-1" />
          <More />
        </Bar>
        <Bar className="w-[33px] shrink-0 pr-1 pl-1">
          <Grip />
          <span className="h-[26px] flex-1 bg-[#fafafa]" />
        </Bar>
      </div>
    </>
  );
}

const COLUMNS: [label: string, x: number, color: string][] = [
  ["5", 383, "#808080"],
  ["6", 646, "#808080"],
  ["7", 909, "#a0a0a0"],
  ["8", 1171, "#d8d8d8"],
];
const ROWS: [label: string, y: number, color: string][] = [
  ["C", 81, "#808080"],
  ["B", 295, "#707070"],
  ["A", 390, "#d8d8d8"],
];

function Bubble({ x, y, label, color }: { x: number; y: number; label: string; color: string }) {
  return (
    <g>
      <circle cx={x + 0.5} cy={y + 0.5} r="12.500" fill="none" stroke="#008a00" shapeRendering="crispEdges" />
      <text x={x + 0.5} y={y + 6} textAnchor="middle" fill={color} className="font-['Liberation_Mono',monospace] text-[16px] font-bold">
        {label}
      </text>
    </g>
  );
}

function DrawingCanvas() {
  return (
    <div className="mr-px min-h-0 flex-1 bg-black">
      <svg className="block size-full" role="img" aria-label="筏板平面图">
        <defs>
          <pattern id="hatch" width="7" height="7" patternUnits="userSpaceOnUse" x="383" y="82">
            <path d="M0 0l7 7M7 0L0 7" stroke="#808080" strokeWidth=".8" fill="none" shapeRendering="crispEdges" />
          </pattern>
        </defs>
        <rect width="909" height="390" fill="#b7b7b7" />
        <rect x="383" y="82" width="263" height="213" fill="#000" />
        <rect x="383" y="82" width="263" height="213" fill="url(#hatch)" stroke="#707070" />
        <path d="M471 82v213" stroke="#b8b400" strokeWidth="2" strokeDasharray="4 5 2 5" />
        <path d="M383 224h263" stroke="#b8b400" strokeWidth="2" strokeDasharray="4 5 2 5" />
        <g stroke="#f00" shapeRendering="crispEdges">
          {COLUMNS.map(([label, x]) => (
            <line key={label} x1={x + 0.5} x2={x + 0.5} y1="0" y2="100%" />
          ))}
          {ROWS.map(([label, y]) => (
            <line key={label} x1="0" x2="1171" y1={y + 0.5} y2={y + 0.5} />
          ))}
        </g>
        {COLUMNS.map(([label, x, color]) => (
          <Bubble key={label} x={x} y={13} label={label} color={color} />
        ))}
        {ROWS.map(([label, y, color]) => (
          <Bubble key={label} x={13} y={y} label={label} color={color} />
        ))}
        <path d="M53 457v-39h-2l4-10 4 10h-2v39z" fill="#0f0" />
        <path d="M55 455h37v-3l12 5-12 5v-3H55z" fill="#f00" />
        <text x="64" y="420" fill="#0f0" className="font-['Liberation_Sans',sans-serif] text-[13px]">Y</text>
        <text x="92" y="446" fill="#f00" className="font-['Liberation_Sans',sans-serif] text-[13px]">X</text>
      </svg>
    </div>
  );
}

function Spin({ id, value, width }: { id: string; value: string; width: string }) {
  return (
    <span className={"flex h-[23px] shrink-0 items-center border border-[#7a7a7a] bg-[#f0f0f0] pr-1 " + width}>
      <input id={id} defaultValue={value} className="w-0 min-w-0 flex-1 bg-transparent pr-2 text-right outline-none" />
      <svg viewBox="0 0 6 15" className="h-[15px] w-1.5"><path d="M0 3h6L3 0zM0 12h6l-3 3z" fill="#606060" /></svg>
    </span>
  );
}

function SnapToolbar() {
  return (
    <div className="flex h-[30px] shrink-0 gap-0.5">
      <Bar className="pl-1">
        <Grip />
        <Tool icon="ortho" label="正交" />
        <span className="-ml-[3px] flex">
          <Pressed icon="snap" label="对象捕捉" />
          <Pressed icon="dynInput" label="动态输入" />
        </span>
      </Bar>
      <Bar className="pr-1 pl-1">
        <Grip />
        <Tool icon="cross" label="交点" />
        <span className="-mr-1 -ml-[3px] flex">
          <Pressed icon="perp" label="垂点" />
          <Pressed icon="mid" label="中点" />
        </span>
        <Tool icon="pentagon" label="顶点" />
        <Tool icon="coord" label="坐标" />
      </Bar>
      <Bar className="pr-1 pl-1">
        <Grip />
        <span className="-ml-0.5">
          <Combo label="偏移方式" value="不偏移" width="w-[58px]" />
        </span>
        <span className="-ml-[3px] h-4 w-px shrink-0 bg-[#b9b9b9]" />
        <div className="-ml-[5px] flex items-center gap-0.5 text-[#808080]">
          <label htmlFor="offX" className="w-[17px]">X=</label>
          <Spin id="offX" value="0" width="w-[58px]" />
          <span className="w-[22px]">mm</span>
          <label htmlFor="offY" className="ml-0.5 w-4">Y=</label>
          <Spin id="offY" value="0" width="w-[58px]" />
          <span className="w-[22px]">mm</span>
          <span className="ml-0.5 h-4 w-px bg-[#b9b9b9]" />
          <input id="rot" type="checkbox" className="size-[11px] appearance-none border border-[#a0a0a0] bg-[#f4f4f4]" />
          <label htmlFor="rot" className="mr-[3px] ml-1.5 text-black">旋转</label>
          <Spin id="angle" value="0.000" width="w-[68px]" />
          <label htmlFor="angle">°</label>
        </div>
      </Bar>
    </div>
  );
}

/* ---------- footer ---------- */

function Cell({ children, className }: { children: ReactNode; className: string }) {
  return <div className={"flex items-center border border-[#d6d6d6] bg-linear-to-b from-white to-[#f1f1f1] pl-px " + className}>{children}</div>;
}
const Mono = ({ children }: { children: string }) => (
  <span className="font-['Liberation_Mono',monospace] text-[10px] whitespace-pre">{children}</span>
);

function StatusBar() {
  return (
    <footer className="flex h-[23px] shrink-0 gap-0.5 pt-[3px]">
      <Cell className="w-[148px]"><Mono>X=326628 Y=10064</Mono></Cell>
      <Cell className="w-[78px]">层高<Mono>:3.55m</Mono></Cell>
      <Cell className="w-[98px]">底标高<Mono>:-3.58m</Mono></Cell>
      <Cell className="w-12"><Mono>0</Mono></Cell>
      <Cell className="flex-1">按鼠标左键指定第一个角点，或拾取构件图元</Cell>
      <Cell className="w-[70px]"><Mono>409.5 FPS</Mono></Cell>
    </footer>
  );
}

const petal = "M12 12H6.500C3 12 .8 9.800.8 6.500.8 3 3.500.8 6.500.8c3.500 0 6 3 5.500 11.200z";

const APPS: { name: string; art: ReactNode; run?: boolean }[] = [
  {
    name: "风车",
    art: (
      <g fill="#e6e6e6" stroke="#000a0c" strokeWidth=".9">
        <path d={petal} />
        <path d={petal} transform="rotate(90 12 12)" />
        <path d={petal} transform="rotate(180 12 12)" />
        <path d={petal} transform="rotate(270 12 12)" />
      </g>
    ),
  },
  {
    name: "提醒",
    art: (
      <>
        <path d="M20 13c0 5-4 8-9 8s-9-4-9-8.500S6 5 11 5c4 0 6.500 3 6.500 6.500S15 17 12 17s-5-2-5-4.500S9 9 11 9s3 1 3 3-1 2.500-2.500 2.500" fill="none" stroke="#bdbdbd" strokeWidth="1.600" />
        <path d="M17.500-1c3 0 4 3 4 5s1 3 2 4h-12c1-1 2-2 2-4s1-5 4-5zM16 9h3l-1.500 1.500z" fill="#f0b010" />
      </>
    ),
  },
  { name: "Edge", art: <path d="M2 10.500C3 5 7 2 12.500 2 19 2 22 7 22 11v3H8.500c.3 3 3 4.500 6 4.500 2.500 0 4.500-.7 6-1.700V21c-2 1.200-4.500 1.800-7 1.800C8 22.800 4.500 19 4.500 15c0-3.500 2-6 5-7.500-.8 1-1.200 2-1.300 3.500h8.300c0-3-1.500-5-5-5C7.500 6 4 8 2 10.500z" fill="#0f7ddb" /> },
  {
    name: "应用商店",
    art: (
      <>
        <path d="M8.500 6V4a3.500 3.500 0 017 0v2" fill="none" stroke="#fff" strokeWidth="1.400" />
        <path d="M1 6h22v16.500H1z" fill="#fff" />
        <path d="M7 9h5v5H7z" fill="#f25022" /><path d="M13 9h5v5h-5z" fill="#7fba00" /><path d="M7 15h5v5H7z" fill="#00a4ef" /><path d="M13 15h5v5h-5z" fill="#ffb900" />
      </>
    ),
  },
  {
    name: "文件资源管理器",
    art: (
      <>
        <path d="M1.500 3.500h8l1.500 2h11.500v16h-21z" fill="#f5cb63" />
        <path d="M1.500 7h21v14.500h-21z" fill="#fde59b" />
        <path d="M5 13h14v9h-4v-4.500H9V22H5z" fill="#3aa6e6" />
      </>
    ),
  },
  {
    name: "Internet Explorer",
    art: (
      <>
        <path d="M4 14C4 8 8 4 13 4s9 4 9 10H9.500c.3 3 1.500 4.500 4 4.500 2 0 3-.7 3.500-2h5c-1 4-4.500 6.500-9 6.500C8 23 4 19 4 14zm5.500-3h7c-.2-2-1.500-3.200-3.500-3.200S9.700 9 9.500 11z" fill="#3aa4ea" />
        <path d="M3 22C-1 17 10 3 18 1.500c5-1 5.500 2.500 3.500 6C21.500 4 19 3 15.500 5 9 8 3 17 4.500 20.500c1 1.500 3 1 5 0C7 23 4.500 23.500 3 22z" fill="#f5c93c" />
      </>
    ),
  },
  {
    name: "360浏览器",
    run: true,
    art: (
      <>
        <circle cx="11.500" cy="12.500" r="10.500" fill="#52b82c" />
        <path d="M5 13c0-4 3-7 7-7s7 3 7 7.500H9.500c.2 2 1.200 3 3 3 1.200 0 2-.4 2.500-1.200h3.700c-.8 2.700-3.200 4.300-6.500 4.300C8 19.600 5 17 5 13zm4.700-2h4.900c-.2-1.400-1.100-2-2.500-2s-2.200.8-2.400 2z" fill="#fff" />
        <path d="M2 20C7 21 18 12 21 3" fill="none" stroke="#e6f5d0" strokeWidth="1.400" />
      </>
    ),
  },
  {
    name: "记事",
    run: true,
    art: (
      <>
        <rect x=".5" y=".5" width="23" height="23" rx="2" fill="#f29a1c" stroke="#c86a0a" />
        <path d="M3 4l13-1 4 14-14 3z" fill="#fff8e8" />
        <path d="M6 8l6-.5M6.500 11l5-.5M7 14l4-.5" stroke="#9a6a3a" />
        <path d="M21 2l1.500 1.500L12 16l-3 1.500 1-3.500z" fill="#a8551c" stroke="#fff" strokeWidth=".5" />
      </>
    ),
  },
  {
    name: "广联达G",
    run: true,
    art: (
      <path d="M23.500 3C20 5 16 4 13 4.500 9 5 7 8.500 7.500 12.500c.5 3.500 3 5.500 6 5 2.500-.5 3.500-3 2-4.500-1-1-3-.5-3.500-.5 1.500-2.500 6-3 8.500-.5 3 3.500 1 8-2.500 10-6 3-14 .5-16.500-6C-.5 9.500 4 2.500 11.500 1.500 16 1 20 3 23.500 3z" fill="#1a9ff0" />
    ),
  },
];

function Taskbar() {
  return (
    <nav className="flex h-10 shrink-0 bg-[#000a0c] text-white">
      <button type="button" aria-label="开始" className="flex w-12 shrink-0 items-center justify-center bg-black">
        <svg viewBox="0 0 16 16" className="size-4"><path d="M0 2.300L6.500 1.400v6.200H0zM7.300 1.300L16 0v7.600H7.300zM0 8.400h6.500v6.200L0 13.700zM7.300 8.400H16V16l-8.700-1.200z" fill="#fff" /></svg>
      </button>
      <div className="flex w-[344px] shrink-0 items-center bg-[#333] pr-[15px] pl-2">
        <svg viewBox="0 0 24 24" className="size-6 shrink-0"><circle cx="12" cy="12" r="9.500" fill="none" stroke="#fff" strokeWidth="2.600" /></svg>
        <input aria-label="搜索" placeholder="在这里输入你要搜索的内容" className="ml-1 min-w-0 flex-1 bg-transparent text-[14px] outline-none placeholder:text-[#9a9a9a]" />
        <svg viewBox="0 0 12 18" className="h-[18px] w-3 shrink-0"><rect x="3.500" y=".5" width="5" height="10" rx="1.500" fill="none" stroke="#a0a0a0" /><path d="M1 7v6h10V7M6 13v4M3.500 17h5" fill="none" stroke="#a0a0a0" /></svg>
      </div>
      <button type="button" aria-label="任务视图" className="flex w-12 shrink-0 items-center justify-center">
        <svg viewBox="0 0 20 16" className="h-4 w-5"><path d="M4.500 2.500h11v12h-11zM3 4.500H.7v8H3M17 4.500h2.300v8H17" fill="none" stroke="#fff" strokeWidth="1.200" /></svg>
      </button>
      <div className="flex w-[448px] shrink-0">
        {APPS.map((app) => (
          <button key={app.name} type="button" aria-label={app.name} className="flex flex-1 flex-col items-center">
            <span className="flex flex-1 items-center">
              <svg viewBox="0 0 24 24" className="size-6 overflow-visible">{app.art}</svg>
            </span>
            <span className={"h-0.5 w-10 " + (app.run ? "bg-[#76b9ed]" : "")} />
          </button>
        ))}
      </div>
      <button type="button" aria-label="广联达" className="flex w-12 shrink-0 flex-col items-center bg-[#333c40]">
        <span className="flex flex-1 items-center"><GLogo className="size-6" /></span>
        <span className="h-0.5 w-full bg-[#76b9ed]" />
      </button>
      <div className="ml-auto flex shrink-0 items-center">
        <div className="flex w-4 flex-col items-end text-[12px] leading-4">
          <span className="-mr-1 -mb-0.5">⋮</span>
          <span className="pt-1">CP</span>
        </div>
        <svg viewBox="0 0 12 8" className="ml-1 h-2 w-3"><path d="M.5 7L6 1.500 11.500 7" fill="none" stroke="#fff" strokeWidth="1.300" /></svg>
        <svg viewBox="0 0 16 12" className="ml-2.5 h-3 w-4"><path d="M4.500 3.500h10v7h-9M15.500 5.500v3" fill="none" stroke="#fff" strokeWidth="1.200" /><path d="M6 5h7v4H6z" fill="#fff" /><path d="M1 0v3M4 0v3M0 3h5v2.500L3 7v4" stroke="#fff" fill="none" /></svg>
        <svg viewBox="0 0 14 14" className="ml-2.5 size-3.5"><path d="M1 13A12 12 0 0113 1M4 13a9 9 0 019-9" fill="none" stroke="#8a8a8a" strokeWidth="1.300" /><path d="M6.500 13A6.500 6.500 0 0113 6.500M9.500 13A3.500 3.500 0 0113 9.500" fill="none" stroke="#fff" strokeWidth="1.300" /><circle cx="12.500" cy="12.500" r="1.300" fill="#fff" /></svg>
        <svg viewBox="0 0 16 14" className="ml-2 h-3.5 w-4"><path d="M.5 4.500h3L7 1.500v11l-3.500-3h-3zM9 5c1 1 1 3 0 4M11 3c2 2 2 6 0 8" fill="none" stroke="#fff" strokeWidth="1.100" /><path d="M13 1c3 3 3 9 0 12" stroke="#777" fill="none" /></svg>
        <svg viewBox="0 0 24 14" className="ml-2 h-3.5 w-6"><path d="M1 1h22v12H1z" fill="none" stroke="#fff" strokeWidth="1.200" /><path d="M3.500 4h17M3.500 7h17" stroke="#fff" strokeDasharray="1.500 1.500" strokeWidth="1.300" /><path d="M6 10.500h12" stroke="#fff" /></svg>
        <span className="ml-2 text-[14px]">中</span>
        <SogouS className="ml-3.5 size-4" />
        <div className="ml-3 flex w-[68px] flex-col items-center text-[12px] leading-[19px] whitespace-nowrap">
          <span>16:50</span>
          <span>2017/11/14</span>
        </div>
        <button type="button" aria-label="通知中心" className="relative ml-4 flex size-7 items-start">
          <svg viewBox="0 0 16 16" className="mt-1.5 size-4"><path d="M0 0h16v12h-4v4l-4-4H0z" fill="#fff" /><path d="M3 3.500h10M3 6h10M3 8.500h6" stroke="#000" /></svg>
          <span className="absolute right-0.5 bottom-0 flex h-[17px] w-[21px] items-center justify-center rounded-full border border-[#888] bg-[#222] text-[11px] font-bold">21</span>
        </button>
        <span className="mr-1 ml-2 h-10 w-px bg-[#555]" />
      </div>
    </nav>
  );
}

export default function App() {
  return (
    <div className={"relative flex h-screen w-full flex-col overflow-hidden bg-[#f0f0f0] text-[12px] leading-4 whitespace-nowrap text-black " + CJK}>
      <TitleBar />
      <MenuRow />
      <ImeBar />
      <TopToolbars />
      <div className="flex min-h-0 flex-1">
        <Sidebar />
        <main className="ml-1 flex min-w-0 flex-1 flex-col">
          <EditToolbars />
          <DrawingCanvas />
          <SnapToolbar />
        </main>
      </div>
      <StatusBar />
      <Taskbar />
    </div>
  );
}
